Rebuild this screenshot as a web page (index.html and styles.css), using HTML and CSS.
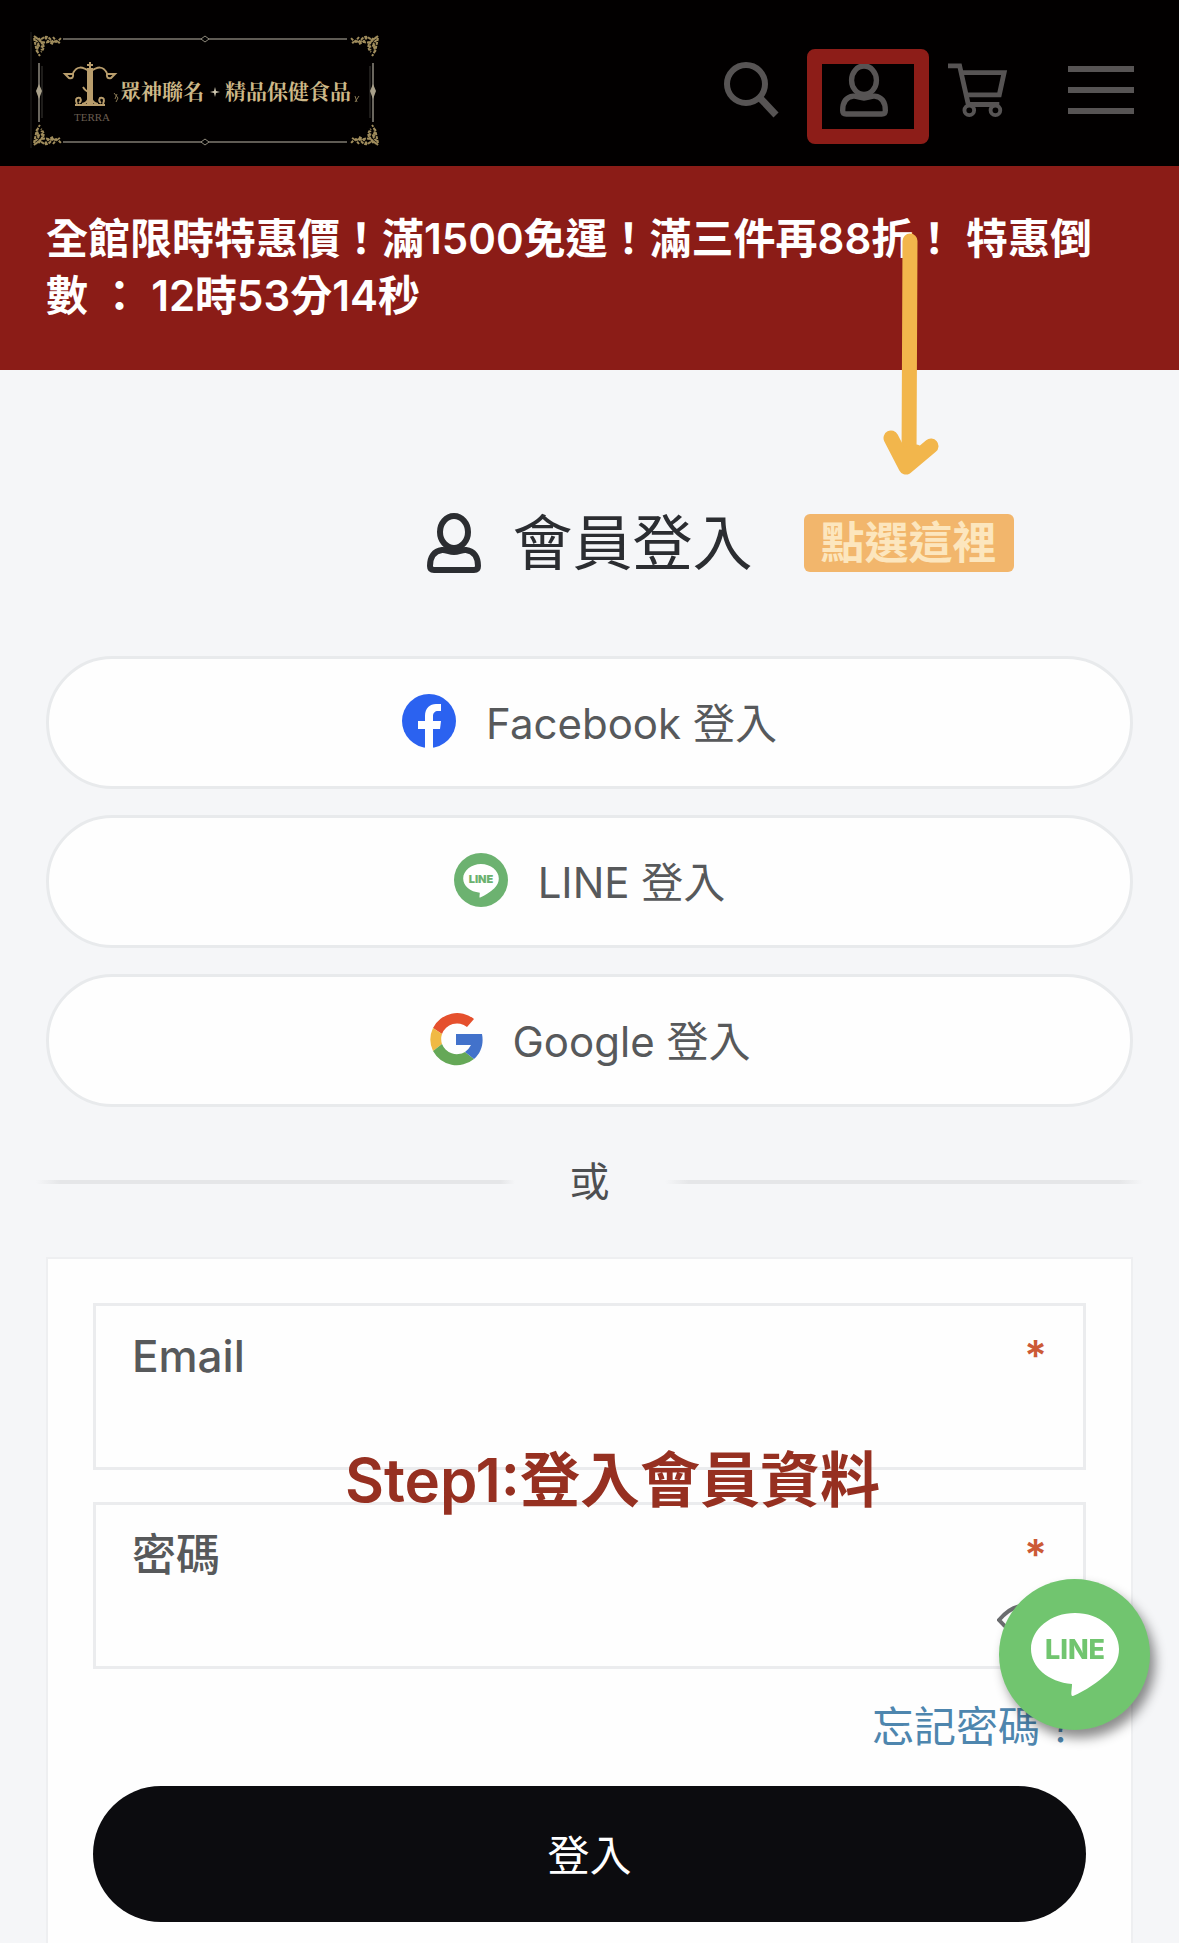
FILE: index.html
```html
<!DOCTYPE html>
<html lang="zh-Hant">
<head>
<meta charset="utf-8">
<meta name="viewport" content="width=device-width, initial-scale=1">
<title>會員登入</title>
<link rel="stylesheet" href="styles.css">
</head>
<body>
<svg class="sprite" aria-hidden="true">
  <symbol id="person" viewBox="0 0 54 60">
    <ellipse cx="27" cy="19" rx="14" ry="16"/>
    <path d="M3 53 C3 44 7 38 15 37 C19 36.500 22 39 27 39 C32 39 35 36.500 39 37 C47 38 51 44 51 53 Q51 57 47 57 H7 Q3 57 3 53 Z"/>
  </symbol>
  <symbol id="corner" viewBox="0 0 30 22">
    <path d="M1 1 Q6 6 10 3 T18 5 T28 3 M3 2 Q8 9 15 7 T27 8 M2 5 Q7 8 5 12 T7 21 M6 3 Q12 12 8 15 M12 2 Q14 6 20 9 M10 9 Q12 13 8 17 M20 2 L24 7 M4 10 L10 12 M1 3 L4 17" fill="none" stroke="#a08c5c" stroke-width="2" stroke-dasharray="3 1"/>
  </symbol>
  <symbol id="bubble" viewBox="0 0 88 84">
    <path d="M44 0 C68 0 88 16 88 36 C88 46 84 53 77 60 C67 69 54 78 42 83 C39 84 41 76 41 71 C17 69 0 54 0 36 C0 16 20 0 44 0 Z" fill="#fff"/>
  </symbol>
</svg>

<header class="topbar">
  <a class="logo" href="#" aria-label="眾神聯名・精品保健食品">
    <svg viewBox="0 0 350 120" width="350" height="120">
      <path d="M1 2 V118" stroke="#242220"/>
      <path d="M33 9 H317 M33 112 H317" stroke="#5f5b54" stroke-width="2"/>
      <path d="M9 33 V92 M343 33 V92" stroke="#6a665e" stroke-width="2"/>
      <path d="M12 36 V88 M340 36 V88" stroke="#3c3a36"/>
      <path d="M175 6 L179 9 L175 12 L171 9 Z M175 109 L179 112 L175 115 L171 112 Z" fill="#000" stroke="#8f897b"/>
      <path d="M9 54 L12 61 L9 69 L6 61 Z M343 54 L346 61 L343 69 L340 61 Z" fill="#a9a08a"/>
      <use href="#corner" x="3" y="5" width="30" height="22"/>
      <use href="#corner" width="30" height="22" transform="translate(349 5) scale(-1 1)"/>
      <use href="#corner" width="30" height="22" transform="translate(3 116) scale(1 -1)"/>
      <use href="#corner" width="30" height="22" transform="translate(349 116) scale(-1 -1)"/>
      <g fill="none" stroke="#b99d6c" stroke-width="2">
        <path d="M60 38 V76" stroke-width="6"/>
        <path d="M60 32 V38 M57 35 H63 M60 42 C52 36 47 36 43 43 M60 42 C68 36 73 36 77 43 M35 44 H43 Q44 49 39 48 Z M85 44 H77 Q76 49 81 48 Z M53 57 Q56 62 60 62 M45 75 H75 M47 74 Q44 67 50 68 Q52 71 49 73 M73 74 Q76 67 70 68 Q68 71 71 73 M52 74 Q58 73 59 67 M68 74 Q62 73 61 67"/>
      </g>
      <text class="logo-sub" x="44" y="91">TERRA</text>
      <path d="M84 63 L88 68 L86 72 M87 64 L85 69 M325 72 L329 66 M325 66 L327 72" stroke="#8a7a55" fill="none"/>
      <text class="logo-text" x="90" y="69">眾神聯名</text>
      <path d="M185 57 L186 61 L190 62 L186 63 L185 67 L184 63 L180 62 L184 61 Z" fill="#cfc6b0"/>
      <text class="logo-text" x="195" y="69">精品保健食品</text>
    </svg>
  </a>
  <nav class="tools">
    <a href="#" class="tool" aria-label="搜尋">
      <svg viewBox="0 0 56 56" width="56" height="56"><circle cx="22" cy="22" r="19"/><path d="M36 36 L52 53" stroke-width="7"/></svg>
    </a>
    <a href="#" class="tool account" aria-label="會員">
      <svg width="48" height="56"><use href="#person"/></svg>
      <span class="highlight"></span>
    </a>
    <a href="#" class="tool" aria-label="購物車">
      <svg viewBox="0 0 62 56" width="60" height="56"><path d="M0 3 H12 L21 43 H53 M15 10 H58 L53 33 H19" stroke-width="5"/><circle cx="22" cy="49" r="5" stroke-width="4"/><circle cx="49" cy="49" r="5" stroke-width="4"/></svg>
    </a>
    <button type="button" class="tool menu" aria-label="選單">
      <svg viewBox="0 0 66 48" width="66" height="48"><path d="M0 3 H66 M0 24 H66 M0 45 H66"/></svg>
    </button>
  </nav>
</header>

<div class="promo">全館限時特惠價！滿1500免運！滿三件再88折！ 特惠倒數 ： 12時53分14秒</div>

<main class="page">
  <div class="heading">
    <h1 class="title"><svg width="54" height="60" aria-hidden="true"><use href="#person"/></svg>會員登入</h1>
    <div class="hint">
      <svg class="arrow" viewBox="0 0 60 246" width="60" height="246" aria-hidden="true"><path d="M28 9 L27 228"/><path d="M9 206 L24 235 L49 214 M27 222 L34 220"/></svg>
      <span class="hint-label">點選這裡</span>
    </div>
  </div>

  <div class="socials">
    <button type="button" class="social">
      <svg viewBox="0 0 54 54" width="54" height="54" aria-hidden="true"><circle cx="27" cy="27" r="27" fill="#2b62f0"/><path d="M23 54 V35 H16 V27 H23 V22 C23 14 28 10 34 10 H39 V17 H36 C33 17 31 19 31 22 V27 H39 L38 35 H31 V54 Z" fill="#fff"/></svg>
      Facebook 登入
    </button>
    <button type="button" class="social">
      <svg viewBox="0 0 54 54" width="54" height="54" aria-hidden="true"><circle cx="27" cy="27" r="27" fill="#6cb270"/><use href="#bubble" x="9" y="11" width="36" height="34"/><text class="line-small" x="27" y="30">LINE</text></svg>
      LINE 登入
    </button>
    <button type="button" class="social">
      <svg viewBox="0 0 54 54" width="54" height="54" aria-hidden="true"><path d="M4 16 A27 27 0 0 1 45 7 L38 15 A16 16 0 0 0 13 22 Z" fill="#e5502d"/><path d="M4 16 A27 27 0 0 0 4 39 L13 32 A16 16 0 0 1 13 22 Z" fill="#f0b944"/><path d="M4 39 A27 27 0 0 0 45 47 L36 40 A16 16 0 0 1 13 32 Z" fill="#65a857"/><path d="M27 22 H53 C55 32 52 41 45 47 L36 40 Q40 37 42 33 H27 Z" fill="#4272cb"/></svg>
      Google 登入
    </button>
  </div>

  <div class="or">或</div>

  <form class="card">
    <div class="field">
      <label for="email">Email</label><span class="required">*</span>
      <input id="email" type="email" required>
    </div>
    <div class="field">
      <label for="password">密碼</label><span class="required">*</span>
      <input id="password" type="password" required>
      <button type="button" class="reveal" aria-label="顯示密碼">
        <svg viewBox="0 0 52 32" width="52" height="32"><path d="M2 16 Q26 -12 50 16 Q26 44 2 16 Z"/><circle cx="26" cy="16" r="7"/></svg>
      </button>
    </div>
    <p class="step">Step1:登入會員資料</p>
    <a class="forgot" href="#">忘記密碼？</a>
    <button type="submit" class="submit">登入</button>
  </form>
</main>

<a class="line-chat" href="#" aria-label="LINE">
  <svg viewBox="0 0 88 84" width="88" height="84"><use href="#bubble"/><text class="line-large" x="44" y="46">LINE</text></svg>
</a>
</body>
</html>
```
FILE: styles.css
```css
* { box-sizing: border-box; }

body {
  margin: 0;
  background: #f5f6f8;
  color: #57595b;
  font-family: Inter, "Noto Sans CJK TC", sans-serif;
  font-size: 42px;
}

button, input { font: inherit; }
a { text-decoration: none; }
svg { display: block; flex: none; }
.sprite { position: absolute; width: 0; height: 0; }

.topbar {
  display: flex;
  justify-content: space-between;
  align-items: center;
  height: 166px;
  padding: 14px 45px 0 30px;
  background: #020000;
}
.logo-text { font: bold 21px "Noto Serif CJK TC", "Noto Sans CJK TC", serif; fill: #cdb888; }
.logo-sub { font: 11px "Liberation Serif", serif; fill: #6a5d50; }

.tools { display: flex; align-items: center; gap: 60px; }
.tool {
  display: block;
  padding: 0;
  border: 0;
  background: none;
  fill: none;
  stroke: #575454;
  stroke-width: 6px;
}
.account { position: relative; }
.highlight {
  position: absolute;
  inset: -13px -41px -26px -33px;
  border: 15px solid #8d1d18;
  border-radius: 8px;
}

.promo {
  min-height: 204px;
  padding: 44px 46px;
  background: #8b1c17;
  color: #fff;
  font-size: 42px;
  font-weight: 600;
  line-height: 57px;
}

.page { padding: 130px 46px 0; }

.heading { position: relative; display: flex; justify-content: center; }
.title {
  display: flex;
  align-items: center;
  gap: 32px;
  margin: 0;
  color: #2b2d31;
  font-size: 60px;
  font-weight: 400;
  line-height: 86px;
}
.title svg { fill: none; stroke: #2b2d31; stroke-width: 6px; }
.hint { position: absolute; left: calc(50% + 214px); top: 14px; }
.hint-label {
  display: block;
  padding: 0 17px;
  border-radius: 6px;
  background: #f2b66c;
  color: #fce6be;
  font-size: 44px;
  font-weight: 700;
  line-height: 58px;
}
.arrow {
  position: absolute;
  left: 78px;
  bottom: 94px;
  fill: none;
  stroke: #f2b64c;
  stroke-width: 15px;
  stroke-linecap: round;
  stroke-linejoin: round;
}

.socials { display: grid; gap: 26px; margin-top: 70px; }
.social {
  display: flex;
  align-items: center;
  justify-content: center;
  gap: 30px;
  height: 133px;
  padding: 0 0 4px;
  border: 3px solid #e8eaec;
  border-radius: 67px;
  background: #fefefe;
  color: #57595b;
}
.line-small { font: 900 11px Inter, sans-serif; fill: #6cb270; text-anchor: middle; }

.or {
  display: flex;
  align-items: center;
  gap: 55px;
  margin: 46px -10px;
  color: #4d4f51;
  font-size: 40px;
  line-height: 58px;
}
.or::before, .or::after { content: ""; flex: 1; height: 4px; }
.or::before { background: linear-gradient(90deg, transparent, #e5e6e8 5%, #e5e6e8 97%, transparent); }
.or::after { background: linear-gradient(90deg, transparent, #e5e6e8 5%, #e5e6e8 95%, transparent); }

.card {
  position: relative;
  display: flex;
  flex-direction: column;
  padding: 44px 45px;
  border: 2px solid #eeeff1;
  background: #fefefe;
}
.field {
  position: relative;
  display: grid;
  grid-template-columns: 1fr auto;
  height: 167px;
  margin-bottom: 32px;
  padding: 21px 36px;
  border: 3px solid #ebecee;
  line-height: 58px;
}
.field label { font-size: 44px; font-weight: 500; }
.field input { grid-column: 1 / -1; min-width: 0; height: 50px; border: 0; background: none; outline: 0; }
.required { color: #cc5a36; font-weight: 600; }
.reveal {
  position: absolute;
  right: 34px;
  bottom: 30px;
  padding: 0;
  border: 0;
  background: none;
  fill: none;
  stroke: #6b6d6f;
  stroke-width: 4px;
}
.step {
  position: absolute;
  top: 178px;
  left: 0;
  right: 0;
  margin: 0;
  padding-left: 46px;
  color: #963021;
  font-size: 60px;
  font-weight: 600;
  line-height: 86px;
  text-align: center;
}
.forgot { align-self: flex-end; margin: -3px 4px 0 0; color: #4e86ae; line-height: 58px; }
.submit {
  height: 136px;
  margin-top: 30px;
  padding: 0 0 4px;
  border: 0;
  border-radius: 68px;
  background: #0c0c0f;
  color: #fff;
}

.line-chat {
  position: fixed;
  right: 29px;
  bottom: 213px;
  display: grid;
  place-items: center;
  width: 151px;
  height: 151px;
  border-radius: 50%;
  background: #71c56f;
  box-shadow: 5px 8px 12px rgb(0 0 0 / 45%);
}
.line-large { font: 800 27px Inter, sans-serif; fill: #71c56f; text-anchor: middle; }
```
